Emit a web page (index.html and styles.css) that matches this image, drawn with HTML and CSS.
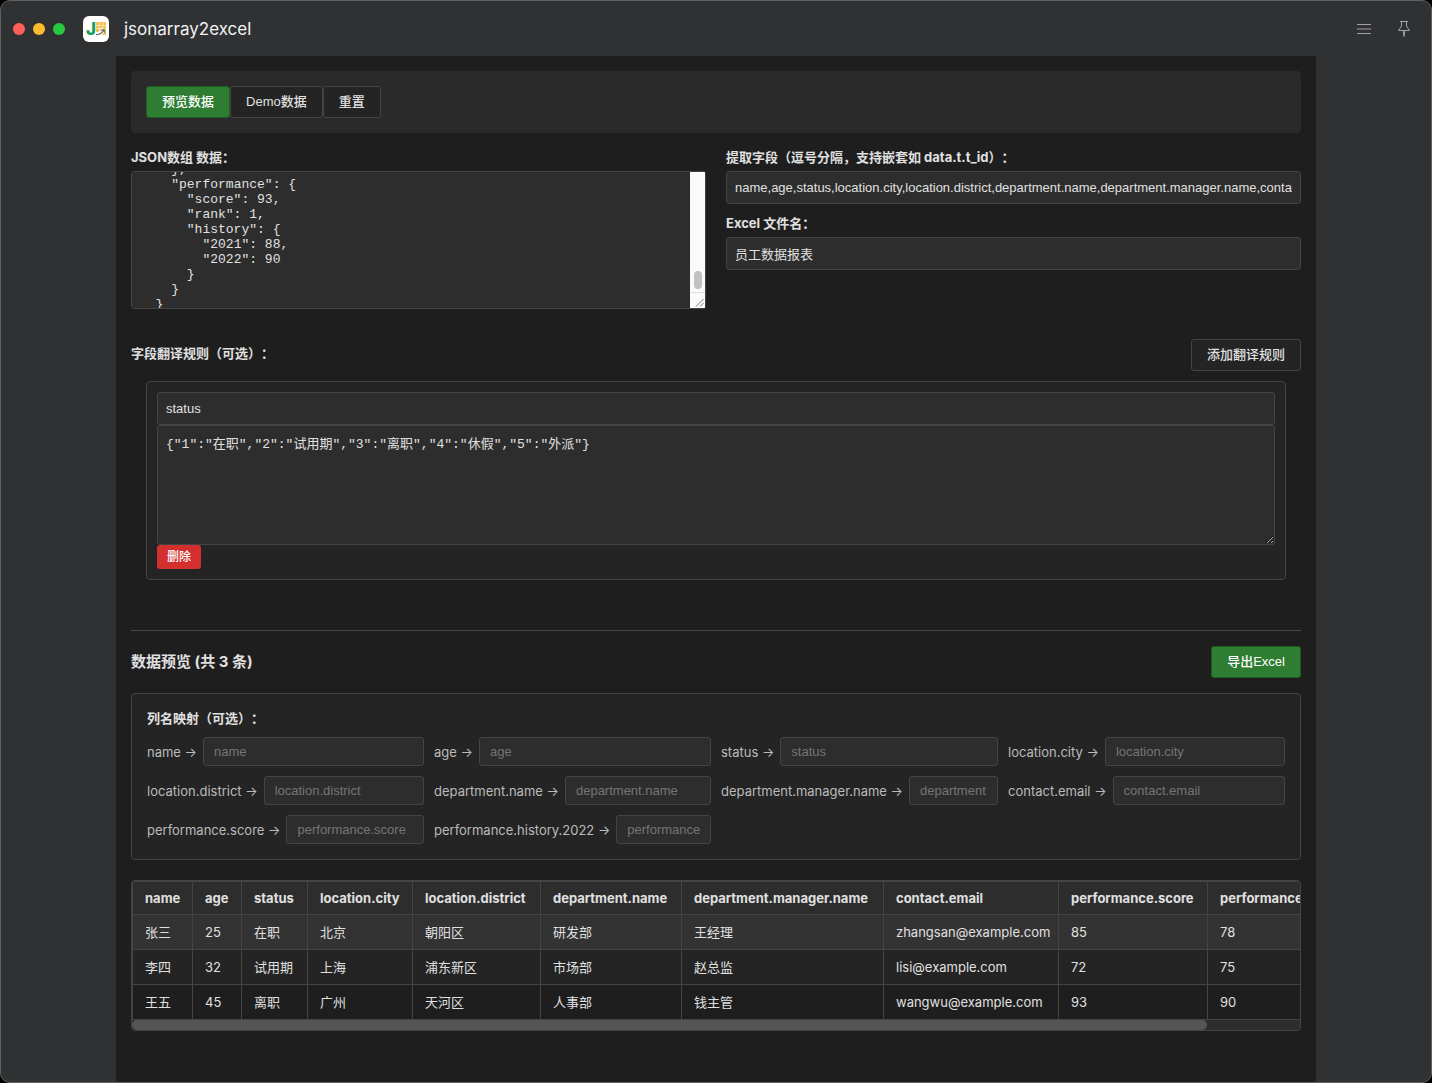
FILE: index.html
```html
<!DOCTYPE html>
<html lang="zh-CN">
<head>
<meta charset="utf-8">
<meta name="viewport" content="width=device-width, initial-scale=1">
<title>jsonarray2excel</title>
<link rel="stylesheet" href="styles.css">
</head>
<body>
<div class="window">
  <header class="titlebar">
    <div class="lights"><span class="light light-close"></span><span class="light light-min"></span><span class="light light-max"></span></div>
    <svg class="app-icon" viewBox="0 0 26 26" aria-hidden="true">
      <rect width="26" height="26" rx="6" fill="#fff"/>
      <rect x="13" y="6" width="10" height="13" rx="1" fill="#f6bd4c"/>
      <path d="M13 9.500h10M13 12.500h10M16.500 6v12M20 6v8" stroke="#fbe3ae" stroke-width="1"/>
      <path d="M13 18c4 .5 6-1.500 7.500-4.500" fill="none" stroke="#fff" stroke-width="4"/>
      <path d="M13 18.500c4 .3 6-1.500 7.500-4M18 14.500l3-1 .5 3" fill="none" stroke="#5f6668" stroke-width="1.200"/>
      <text class="app-letter" x="3" y="19">J</text>
    </svg>
    <h1 class="app-name">jsonarray2excel</h1>
    <div class="title-actions">
      <button class="icon-button" type="button" aria-label="菜单">
        <svg width="16" height="18" viewBox="0 0 16 18"><path d="M1 4.500h14M1 9h14M1 13.500h14" stroke="currentColor" fill="none"/></svg>
      </button>
      <button class="icon-button" type="button" aria-label="置顶">
        <svg width="16" height="18" viewBox="0 0 16 18"><path d="M4 1.500h8M5.500 1.500v4.500L2.500 10.500h11L10.500 6V1.500M7 10.500l1 6 1-6" stroke="currentColor" fill="none"/></svg>
      </button>
    </div>
  </header>

  <main class="content">
    <div class="toolbar">
      <button class="btn btn-primary" type="button">预览数据</button><button class="btn" type="button">Demo数据</button><button class="btn" type="button">重置</button>
    </div>

    <div class="form-grid">
      <div class="field">
        <label for="json">JSON数组 数据：</label>
        <div class="json-box">
          <textarea id="json" class="control json-input" spellcheck="false"></textarea>
          <div class="v-scroll" aria-hidden="true">
            <div class="v-track"><div class="v-thumb"></div></div>
            <svg class="grip" width="15" height="15" viewBox="0 0 15 15"><path d="M6 13.500l7.500-7.500M10 13.500l3.500-3.500" stroke="#777" fill="none"/></svg>
          </div>
        </div>
      </div>
      <div class="field-stack">
        <div class="field">
          <label for="fields">提取字段（逗号分隔，支持嵌套如 data.t.t_id）：</label>
          <input id="fields" class="control" type="text" value="name,age,status,location.city,location.district,department.name,department.manager.name,contact.email,performance.score,performance.history.2022">
        </div>
        <div class="field">
          <label for="filename">Excel 文件名：</label>
          <input id="filename" class="control" type="text" value="员工数据报表">
        </div>
      </div>
    </div>

    <section class="rules">
      <div class="section-head">
        <h2 class="label-title rules-title">字段翻译规则（可选）：</h2>
        <button class="btn" type="button">添加翻译规则</button>
      </div>
      <div class="rule">
        <input class="control" type="text" aria-label="字段" value="status">
        <textarea class="control rule-map" aria-label="翻译规则" spellcheck="false">{"1":"在职","2":"试用期","3":"离职","4":"休假","5":"外派"}</textarea>
        <button class="btn-delete" type="button">删除</button>
      </div>
    </section>

    <section class="preview">
      <div class="section-head">
        <h2 class="preview-title">数据预览 (共 3 条)</h2>
        <button class="btn btn-primary" type="button">导出Excel</button>
      </div>
      <div class="mapping">
        <h3 class="label-title">列名映射（可选）：</h3>
        <div class="mapping-grid">
          <div class="map-item"><label for="m1">name →</label><input id="m1" class="control" type="text" placeholder="name"></div>
          <div class="map-item"><label for="m2">age →</label><input id="m2" class="control" type="text" placeholder="age"></div>
          <div class="map-item"><label for="m3">status →</label><input id="m3" class="control" type="text" placeholder="status"></div>
          <div class="map-item"><label for="m4">location.city →</label><input id="m4" class="control" type="text" placeholder="location.city"></div>
          <div class="map-item"><label for="m5">location.district →</label><input id="m5" class="control" type="text" placeholder="location.district"></div>
          <div class="map-item"><label for="m6">department.name →</label><input id="m6" class="control" type="text" placeholder="department.name"></div>
          <div class="map-item"><label for="m7">department.manager.name →</label><input id="m7" class="control" type="text" placeholder="department.manager.name"></div>
          <div class="map-item"><label for="m8">contact.email →</label><input id="m8" class="control" type="text" placeholder="contact.email"></div>
          <div class="map-item"><label for="m9">performance.score →</label><input id="m9" class="control" type="text" placeholder="performance.score"></div>
          <div class="map-item"><label for="m10">performance.history.2022 →</label><input id="m10" class="control" type="text" placeholder="performance.history.2022"></div>
        </div>
      </div>
      <div class="table-frame">
        <div class="table-scroll">
          <table>
            <colgroup>
              <col class="c-name"><col class="c-age"><col class="c-status"><col class="c-city"><col class="c-district"><col class="c-dept"><col class="c-manager"><col class="c-email"><col class="c-score"><col class="c-history">
            </colgroup>
            <thead>
              <tr><th>name</th><th>age</th><th>status</th><th>location.city</th><th>location.district</th><th>department.name</th><th>department.manager.name</th><th>contact.email</th><th>performance.score</th><th>performance.history.2022</th></tr>
            </thead>
            <tbody>
              <tr class="active"><td>张三</td><td>25</td><td>在职</td><td>北京</td><td>朝阳区</td><td>研发部</td><td>王经理</td><td>zhangsan@example.com</td><td>85</td><td>78</td></tr>
              <tr><td>李四</td><td>32</td><td>试用期</td><td>上海</td><td>浦东新区</td><td>市场部</td><td>赵总监</td><td>lisi@example.com</td><td>72</td><td>75</td></tr>
              <tr><td>王五</td><td>45</td><td>离职</td><td>广州</td><td>天河区</td><td>人事部</td><td>钱主管</td><td>wangwu@example.com</td><td>93</td><td>90</td></tr>
            </tbody>
          </table>
        </div>
        <div class="h-track" aria-hidden="true"><div class="h-thumb"></div></div>
      </div>
    </section>
  </main>
</div>
<script src="app.js"></script>
</body>
</html>
```
FILE: styles.css
```css
* { box-sizing: border-box; }

html { background: #000; }

body {
  margin: 0;
  color: #e0e0e0;
  font: 13px/18px Inter, "Noto Sans CJK SC", sans-serif;
  text-spacing-trim: space-all;
}

h1, h2, h3 { margin: 0; }

.window {
  display: flex;
  flex-direction: column;
  min-height: 100vh;
  overflow: hidden;
  background: #303133;
  border: 1px solid #606163;
  border-radius: 10px;
}

.titlebar {
  display: flex;
  align-items: center;
  height: 55px;
  padding: 0 19px 0 12px;
}

.lights { display: flex; gap: 8px; margin-right: 18px; }
.light { width: 12px; height: 12px; border-radius: 50%; }
.light-close { background: #ff5f57; }
.light-min { background: #febc2e; }
.light-max { background: #28c840; }

.app-icon { width: 26px; height: 26px; margin-right: 15px; }
.app-letter { font: 800 17px Inter, sans-serif; fill: #1f9d55; }

.app-name {
  color: #f2f2f2;
  font-size: 17px;
  font-weight: 400;
  line-height: 24px;
}

.title-actions { display: flex; gap: 24px; margin-left: auto; }

.icon-button {
  display: flex;
  align-items: center;
  justify-content: center;
  width: 16px;
  height: 18px;
  padding: 0;
  color: #a0a1a3;
  background: none;
  border: 0;
}

.content {
  flex: 1;
  width: 100%;
  max-width: 1200px;
  margin: 0 auto;
  padding: 15px;
  background: #1e1e1e;
}

.toolbar {
  display: flex;
  padding: 15px;
  margin-bottom: 15px;
  background: #2a2a2a;
  border-radius: 4px;
}

.btn, .btn-delete {
  color: #e0e0e0;
  font: 500 13px/18px "Liberation Sans", "Noto Sans CJK SC", sans-serif;
  border-radius: 3px;
}

.btn {
  height: 32px;
  padding: 0 15px;
  background: #242424;
  border: 1px solid #444;
}

.btn-primary {
  color: #fff;
  background: #2e7d32;
  border-color: #1b5e20;
}

.btn-delete {
  display: block;
  height: 24px;
  padding: 0 10px;
  color: #fff;
  font-size: 12px;
  background: #d32f2f;
  border: 0;
}

.form-grid {
  display: grid;
  grid-template-columns: 1fr 1fr;
  gap: 20px;
  margin-bottom: 30px;
}

.field { display: flex; flex-direction: column; gap: 5px; }
.field-stack { display: flex; flex-direction: column; gap: 10px; }
.field label, .label-title { font-size: 13px; font-weight: 700; line-height: 18px; }

.control {
  display: block;
  width: 100%;
  height: 33px;
  padding: 8px;
  color: #e0e0e0;
  font: 13px/15px "Liberation Sans", "Noto Sans CJK SC", sans-serif;
  background: #2d2d2d;
  border: 1px solid #444;
  border-radius: 3px;
  outline: 0;
}

.control::placeholder { color: #757575; }

textarea.control { font-family: "Liberation Mono", "Noto Sans CJK SC", monospace; }

.json-box { position: relative; }

.json-input { height: 138px; padding-right: 23px; resize: none; }

/* Scroll bar lying over the right edge of the JSON box */
.v-scroll {
  position: absolute;
  top: 1px;
  right: 1px;
  bottom: 1px;
  display: flex;
  flex-direction: column;
  width: 15px;
  background: #fafafa;
}

.v-track {
  display: flex;
  flex: 1;
  flex-direction: column;
  align-items: center;
  justify-content: flex-end;
  padding-bottom: 3px;
  border-bottom: 1px solid #ddd;
}

.v-thumb { width: 8px; height: 18px; background: #c1c1c1; border-radius: 4px; }
.grip { display: block; }

.section-head {
  display: flex;
  align-items: center;
  justify-content: space-between;
}

.rules { margin-bottom: 50px; }
.rules-title { padding-bottom: 5px; }

.rule {
  margin: 10px 15px 0;
  padding: 10px;
  background: #242424;
  border: 1px solid #444;
  border-radius: 4px;
}

.rule-map { height: 120px; padding-top: 11px; }

.preview { padding-top: 15px; border-top: 1px solid #444; }
.preview-title { font-size: 15px; font-weight: 700; line-height: 20px; }

.mapping {
  margin: 15px 0 20px;
  padding: 15px;
  background: #242424;
  border: 1px solid #444;
  border-radius: 4px;
}

.mapping-grid {
  display: grid;
  grid-template-columns: repeat(4, minmax(0, 1fr));
  gap: 10px;
  margin-top: 10px;
}

.map-item { display: flex; align-items: center; gap: 6px; color: #bbb; }
.map-item label { white-space: nowrap; }
.map-item .control { flex: 1; min-width: 0; height: 29px; padding: 6px 10px; }

.table-frame {
  overflow: hidden;
  background: #333;
  border: 1px solid #444;
  border-radius: 4px;
}

.table-scroll { overflow-x: auto; scrollbar-width: none; background: #1e1e1e; }

.h-track { height: 10px; background: #2d2d2d; }
.h-thumb { width: 92%; height: 10px; background: #555; border-radius: 5px; }

table {
  width: 1271px;
  table-layout: fixed;
  border-collapse: collapse;
  white-space: nowrap;
}

.c-name { width: 60px; }
.c-age { width: 49px; }
.c-status { width: 66px; }
.c-city { width: 105px; }
.c-district { width: 128px; }
.c-dept { width: 141px; }
.c-manager { width: 202px; }
.c-email { width: 175px; }
.c-score { width: 149px; }

th, td {
  height: 35px;
  padding: 0 12px;
  text-align: left;
  border: 1px solid #444;
}

th { height: 33px; font-weight: 700; background: #2d2d2d; }
tbody tr:nth-child(even) { background: #242424; }
tbody tr.active { background: #333; }
```
FILE: app.js
```js
const employees = [
  {
    name: "张三", age: 25, status: 1,
    location: { city: "北京", district: "朝阳区" },
    department: { name: "研发部", manager: { name: "王经理" } },
    contact: { email: "zhangsan@example.com" },
    performance: { score: 85, rank: 2, history: { 2021: 80, 2022: 78 } }
  },
  {
    name: "李四", age: 32, status: 2,
    location: { city: "上海", district: "浦东新区" },
    department: { name: "市场部", manager: { name: "赵总监" } },
    contact: { email: "lisi@example.com" },
    performance: { score: 72, rank: 3, history: { 2021: 70, 2022: 75 } }
  },
  {
    name: "王五", age: 45, status: 3,
    location: { city: "广州", district: "天河区" },
    department: { name: "人事部", manager: { name: "钱主管" } },
    contact: { email: "wangwu@example.com" },
    performance: { score: 93, rank: 1, history: { 2021: 88, 2022: 90 } }
  }
];

const box = document.getElementById("json");
box.value = JSON.stringify(employees, null, 2);
box.scrollTop = box.scrollHeight - box.clientHeight - 27;
```
